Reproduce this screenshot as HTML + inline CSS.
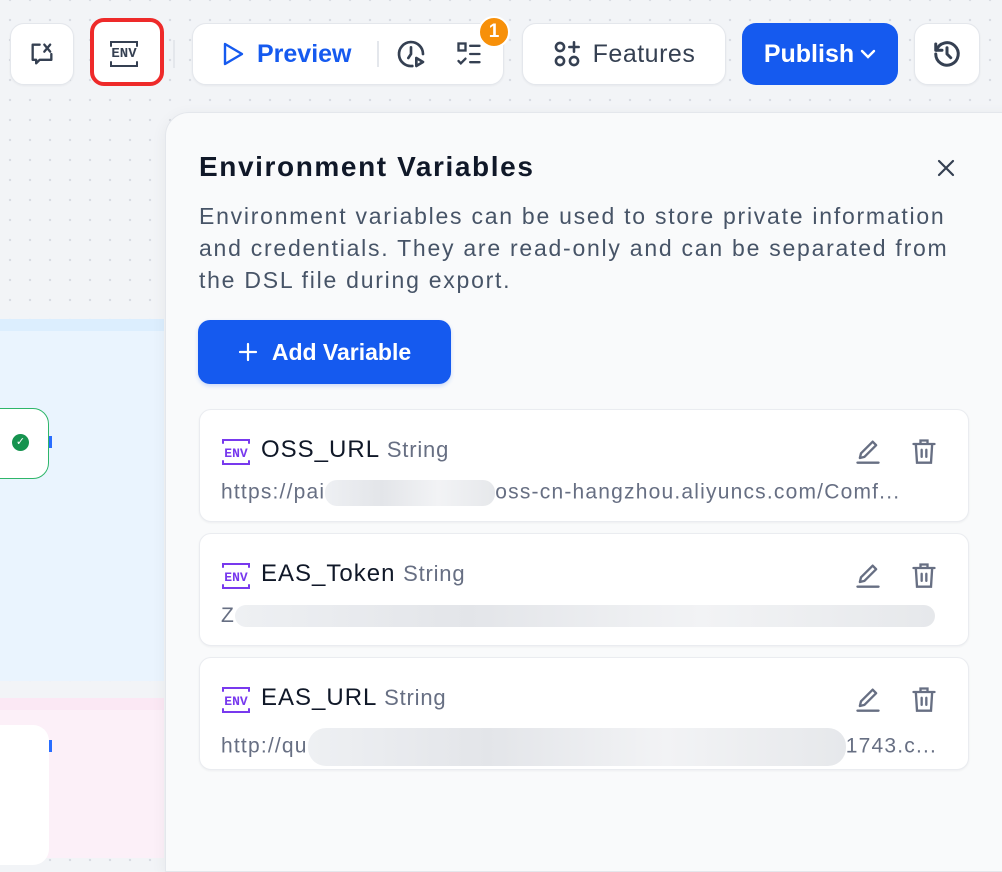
<!DOCTYPE html><html><head><style>
*{box-sizing:border-box;margin:0;padding:0}
body{width:1002px;height:846px;overflow:hidden;position:relative;font-family:"Liberation Sans",sans-serif;background-color:#f2f4f7;background-image:radial-gradient(#d9dce3 1.2px,transparent 1.3px);background-size:20px 20px;background-position:0 10px}
.btn{position:absolute;background:#fff;border:1px solid #e4e7ec;border-radius:14px;display:flex;align-items:center;justify-content:center;box-shadow:0 1px 2px rgba(16,24,40,.05)}
.abs{position:absolute}
.panel{position:absolute;left:165px;top:112px;width:860px;height:760px;background:#f9fafb;border:1px solid #e4e7ec;border-radius:24px 0 0 0;box-shadow:0 4px 16px rgba(16,24,40,.06)}
.card{position:absolute;left:199px;width:770px;height:113px;background:#fff;border:1px solid #eaecf0;border-radius:12px;box-shadow:0 1px 2px rgba(16,24,40,.05)}
.name{position:absolute;left:61px;top:26px;font-size:24px;color:#101828;letter-spacing:1px}
.name span{color:#676f83;font-size:22px;letter-spacing:.8px}
.val{position:absolute;left:21px;top:70px;font-size:21px;color:#676f83;white-space:nowrap;letter-spacing:1.2px}
.bl{display:inline-block;vertical-align:middle;background:linear-gradient(90deg,#eef0f3,#e3e5e9,#f2f3f5,#e6e8eb);border-radius:12px}
.ev{position:absolute;left:20px;top:27px;width:32px;height:30px}
</style></head><body>
<div class="abs" style="left:0;top:319px;width:164px;height:362px;background:#eaf4fe;border-top:12px solid #dceefe"></div>
<div class="abs" style="left:0;top:698px;width:164px;height:160px;background:#fcf0f8;border-top:12px solid #fbe8f4"></div>
<div class="abs" style="left:-20px;top:408px;width:69px;height:71px;background:#fff;border:1.5px solid #2fb66a;border-radius:16px"></div>
<div class="abs" style="left:12px;top:434px;width:17px;height:17px;border-radius:50%;background:#16934f;color:#fff;font-size:11px;text-align:center;line-height:17px">✓</div>
<div class="abs" style="left:49px;top:436px;width:3px;height:12px;background:#296dff"></div>
<div class="abs" style="left:-20px;top:725px;width:69px;height:140px;background:#fff;border-radius:16px"></div>
<div class="abs" style="left:49px;top:740px;width:3px;height:12px;background:#296dff"></div>

<div class="btn" style="left:10px;top:23px;width:64px;height:62px"><svg width="28" height="28" viewBox="0 0 24 24" fill="none" stroke="#354052" stroke-width="2" stroke-linecap="round" stroke-linejoin="round"><path d="M10 4H4v13h3v3l3-3h10v-5"/><path d="M14 4l5 6M19 4l-5 6"/></svg></div>
<div class="abs" style="left:90px;top:18px;width:74px;height:68px;border:4px solid #ee2a2a;border-radius:14px;background:#fff"></div>
<svg class="abs" style="left:108px;top:38px" width="32" height="32" viewBox="0 0 32 32" fill="none" stroke="#354052" stroke-width="2" stroke-linecap="round"><path d="M3 8V4h26v4M3 24v4h26v-4"/></svg>
<div class="abs" style="left:104px;top:43px;width:40px;text-align:center;font:bold 14px 'Liberation Mono',monospace;color:#354052;line-height:22px">ENV</div>
<div class="abs" style="left:173px;top:40px;width:2px;height:28px;background:#e4e7ec"></div>
<div class="btn" style="left:192px;top:23px;width:312px;height:62px;justify-content:flex-start">
 <svg style="margin-left:28px" width="24" height="26" viewBox="0 0 24 26" fill="none" stroke="#155aef" stroke-width="2.4" stroke-linejoin="round"><path d="M4 3l17 10L4 23z"/></svg>
 <span style="margin-left:12px;font-size:25px;font-weight:bold;color:#155aef">Preview</span>
 <div style="margin-left:25px;width:2px;height:26px;background:#e4e7ec"></div>
 <svg style="margin-left:16px" width="32" height="32" viewBox="0 0 24 24" fill="none" stroke="#354052" stroke-width="2" stroke-linecap="round"><path d="M21 12a9 9 0 1 0-8 9"/><path d="M12 7v5l-2 3"/><path d="M16 15l5 3-5 3z" stroke-linejoin="round"/></svg>
 <svg style="margin-left:28px" width="28" height="28" viewBox="0 0 24 24" fill="none" stroke="#354052" stroke-width="2" stroke-linecap="round"><rect x="3" y="3" width="6" height="6"/><path d="M13 5h8M13 12h8M13 19h8M3 18l2 2 4-4"/></svg>
</div>
<div class="abs" style="left:478px;top:16px;width:32px;height:32px;border-radius:50%;background:#f79009;border:2px solid #fff;color:#fff;font-weight:bold;font-size:19px;text-align:center;line-height:28px">1</div>
<div class="btn" style="left:522px;top:23px;width:204px;height:62px"><svg width="28" height="28" viewBox="0 0 24 24" fill="none" stroke="#354052" stroke-width="2.2" stroke-linecap="round"><circle cx="6" cy="6" r="3.5"/><circle cx="6" cy="18" r="3.5"/><circle cx="18" cy="18" r="3.5"/><path d="M18 2v8M14 6h8"/></svg><span style="margin-left:12px;font-size:25px;color:#354052;letter-spacing:.5px">Features</span></div>
<div class="abs" style="left:742px;top:23px;width:156px;height:62px;background:#155aef;border-radius:14px;color:#fff;font-size:25px;font-weight:bold;display:flex;align-items:center;justify-content:center">Publish<svg style="margin-left:6px" width="16" height="12" viewBox="0 0 16 12" fill="none" stroke="#fff" stroke-width="2.4" stroke-linecap="round"><path d="M2 3l6 6 6-6"/></svg></div>
<div class="btn" style="left:914px;top:23px;width:66px;height:62px"><svg width="30" height="30" viewBox="0 0 24 24" fill="none" stroke="#354052" stroke-width="2.4" stroke-linecap="round" stroke-linejoin="round"><path d="M3.5 9A9 9 0 1 1 3 12"/><path d="M3 4v5h5"/><path d="M12 7v5l3 3"/></svg></div>

<div class="panel"></div>
<div class="abs" style="left:199px;top:151px;font-size:28px;font-weight:bold;color:#101828;letter-spacing:1.6px">Environment Variables</div>
<svg class="abs" style="left:936px;top:158px" width="20" height="20" viewBox="0 0 20 20" stroke="#354052" stroke-width="2.2" stroke-linecap="round"><path d="M3 3l14 14M17 3L3 17"/></svg>
<div class="abs" style="left:199px;top:200px;width:790px;font-size:23px;line-height:32px;color:#475467;letter-spacing:1.75px">Environment variables can be used to store private information and credentials. They are read-only and can be separated from the DSL file during export.</div>
<div class="abs" style="left:198px;top:320px;width:253px;height:64px;background:#155aef;border-radius:12px;color:#fff;font-size:23px;font-weight:bold;display:flex;align-items:center;justify-content:center;box-shadow:0 2px 4px rgba(21,90,239,.2)"><svg width="20" height="20" viewBox="0 0 20 20" stroke="#fff" stroke-width="2.2" stroke-linecap="round" style="margin-right:14px"><path d="M10 2v16M2 10h16"/></svg>Add Variable</div>

<div class="card" style="top:409px">
 <svg class="ev" viewBox="0 0 32 30" fill="none" stroke="#7839ee" stroke-width="2" stroke-linecap="round"><path d="M3 6V3h26v3M3 24v3h26v-3"/><text x="16" y="20" text-anchor="middle" font-family="Liberation Mono" font-weight="bold" font-size="13" fill="#7839ee" stroke="none">ENV</text></svg>
 <div class="name">OSS_URL <span>String</span></div>
 <svg class="abs" style="left:654px;top:27px" width="28" height="28" viewBox="0 0 24 24" fill="none" stroke="#676f83" stroke-width="2" stroke-linejoin="round"><path d="M5 18l1-4L16 4l3 3L9 17z"/><path d="M3 22h18" stroke-linecap="round"/></svg>
 <svg class="abs" style="left:710px;top:27px" width="28" height="28" viewBox="0 0 24 24" fill="none" stroke="#676f83" stroke-width="2" stroke-linecap="round"><path d="M3 6h18M9 6V3h6v3M5 6l1 16h12l1-16M10 11v6M14 11v6"/></svg>
 <div class="val">https://pai<span class="bl" style="width:170px;height:26px"></span>oss-cn-hangzhou.aliyuncs.com/Comf...</div>
</div>
<div class="card" style="top:533px">
 <svg class="ev" viewBox="0 0 32 30" fill="none" stroke="#7839ee" stroke-width="2" stroke-linecap="round"><path d="M3 6V3h26v3M3 24v3h26v-3"/><text x="16" y="20" text-anchor="middle" font-family="Liberation Mono" font-weight="bold" font-size="13" fill="#7839ee" stroke="none">ENV</text></svg>
 <div class="name">EAS_Token <span>String</span></div>
 <svg class="abs" style="left:654px;top:27px" width="28" height="28" viewBox="0 0 24 24" fill="none" stroke="#676f83" stroke-width="2" stroke-linejoin="round"><path d="M5 18l1-4L16 4l3 3L9 17z"/><path d="M3 22h18" stroke-linecap="round"/></svg>
 <svg class="abs" style="left:710px;top:27px" width="28" height="28" viewBox="0 0 24 24" fill="none" stroke="#676f83" stroke-width="2" stroke-linecap="round"><path d="M3 6h18M9 6V3h6v3M5 6l1 16h12l1-16M10 11v6M14 11v6"/></svg>
 <div class="val">Z<span class="bl" style="width:700px;height:22px"></span></div>
</div>
<div class="card" style="top:657px">
 <svg class="ev" viewBox="0 0 32 30" fill="none" stroke="#7839ee" stroke-width="2" stroke-linecap="round"><path d="M3 6V3h26v3M3 24v3h26v-3"/><text x="16" y="20" text-anchor="middle" font-family="Liberation Mono" font-weight="bold" font-size="13" fill="#7839ee" stroke="none">ENV</text></svg>
 <div class="name">EAS_URL <span>String</span></div>
 <svg class="abs" style="left:654px;top:27px" width="28" height="28" viewBox="0 0 24 24" fill="none" stroke="#676f83" stroke-width="2" stroke-linejoin="round"><path d="M5 18l1-4L16 4l3 3L9 17z"/><path d="M3 22h18" stroke-linecap="round"/></svg>
 <svg class="abs" style="left:710px;top:27px" width="28" height="28" viewBox="0 0 24 24" fill="none" stroke="#676f83" stroke-width="2" stroke-linecap="round"><path d="M3 6h18M9 6V3h6v3M5 6l1 16h12l1-16M10 11v6M14 11v6"/></svg>
 <div class="val">http://qu<span class="bl" style="width:538px;height:38px;border-radius:18px"></span>1743.c...</div>
</div>
</body></html>
